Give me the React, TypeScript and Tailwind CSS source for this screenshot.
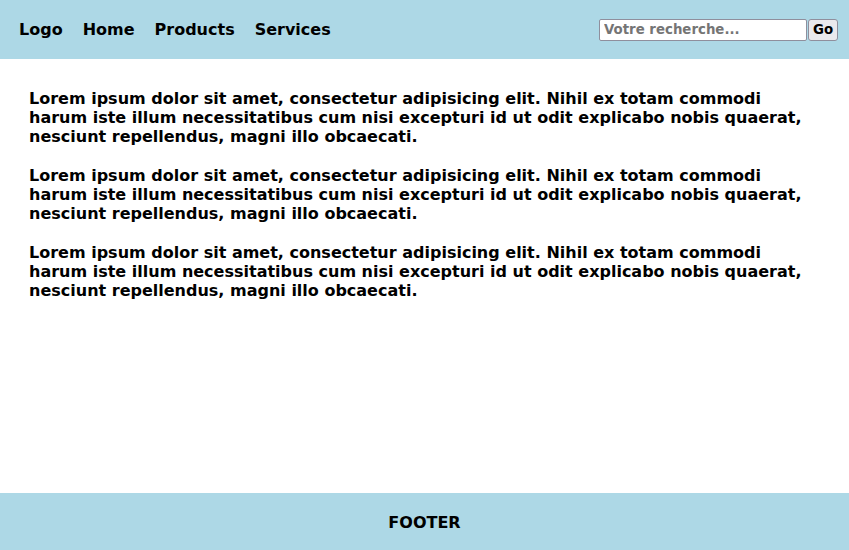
import React from "react";

const links = ["Logo", "Home", "Products", "Services"];

const lorem =
  "Lorem ipsum dolor sit amet, consectetur adipisicing elit. Nihil ex totam commodi harum iste illum necessitatibus cum nisi excepturi id ut odit explicabo nobis quaerat, nesciunt repellendus, magni illo obcaecati.";

const App: React.FC = () => {
  return (
    <div className="flex h-screen flex-col font-['DejaVu_Sans',sans-serif] font-bold text-black">
      {/* Top bar */}
      <header className="flex h-[59px] shrink-0 items-center justify-between bg-[#add8e6] pl-[19px] pr-[11px]">
        <nav className="flex gap-[20px] text-base">
          {links.map((l) => (
            <a key={l} href="#">
              {l}
            </a>
          ))}
        </nav>
        <form className="flex items-center" onSubmit={(e) => e.preventDefault()}>
          <input
            type="text"
            placeholder="Votre recherche..."
            className="h-[22px] w-[208px] rounded-[2px] border border-[#8f8f9d] bg-white px-[4px] text-[13.333px] font-bold placeholder:text-[#757575] outline-none"
          />
          <button
            type="submit"
            className="ml-px h-[22px] w-[30px] rounded-[3px] border border-[#8f8f9d] bg-[#e9e9ed] text-[13.333px] font-bold"
          >
            Go
          </button>
        </form>
      </header>

      {/* Main content */}
      <main className="flex-1 px-[29px] pt-[30px]">
        {[0, 1, 2].map((i) => (
          <p key={i} className="mb-[20px] text-base leading-[19px]">
            {lorem}
          </p>
        ))}
      </main>

      <footer className="flex h-[57px] shrink-0 items-center justify-center bg-[#add8e6] pt-[2px] text-base">
        FOOTER
      </footer>
    </div>
  );
};

export default App;
